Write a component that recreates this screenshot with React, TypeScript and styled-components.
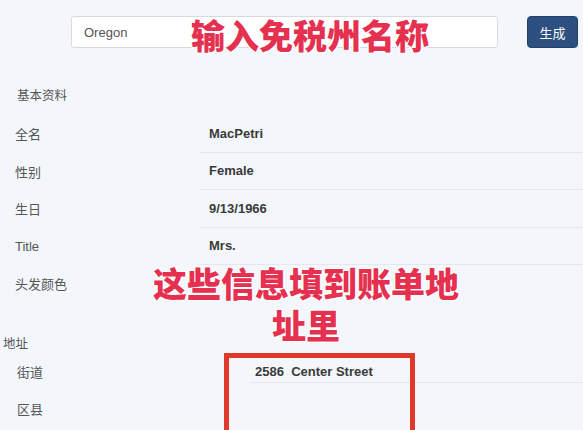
import styled, { createGlobalStyle } from "styled-components"

const GlobalStyle = createGlobalStyle`
    body {
        margin: 0;
        background-color: #f3f7fb;
        font-family: "Liberation Sans", "Noto Sans CJK SC", sans-serif;
    }
`

const Page = styled.div`
    position: relative;
    width: 583px;
    height: 430px;
    overflow: hidden;
    background-color: #f3f7fb;
`

const TopBar = styled.div`
    display: flex;
    align-items: center;
    gap: 29px;
    padding: 16px 5px 0 71px;
`

const SearchInput = styled.input`
    width: 427px;
    height: 32px;
    box-sizing: border-box;
    border: 1px solid #d6d9dd;
    border-radius: 3px;
    background-color: #ffffff;
    padding: 0 12px;
    font-family: "Liberation Sans", sans-serif;
    font-size: 13px;
    color: #555555;
    outline: none;
`

const GenerateButton = styled.button`
    width: 51px;
    height: 32px;
    background-color: #2d5081;
    border: 1px solid #22426c;
    border-radius: 4px;
    color: #ffffff;
    font-family: "Noto Sans CJK SC", sans-serif;
    font-size: 13px;
    padding: 0;
    cursor: pointer;
`

const SectionTitle = styled.div<{ $top: number; $left: number }>`
    margin: ${p => p.$top}px 0 0 ${p => p.$left}px;
    line-height: 20px;
    font-family: "Noto Sans CJK SC", sans-serif;
    font-size: 12.5px;
    color: #555555;
`

const InfoList = styled.div`
    margin-top: 10px;
`

const InfoRow = styled.div`
    display: grid;
    grid-template-columns: 185px 1fr;
    height: 37.5px;
    padding-left: 15px;

    &:last-child > div:last-child {
        border-bottom: none;
    }
`

const Label = styled.div`
    align-self: center;
    font-family: "Liberation Sans", "Noto Sans CJK SC", sans-serif;
    font-size: 13px;
    color: #555555;
`

const Value = styled.div`
    display: flex;
    align-items: center;
    padding-left: 9px;
    border-bottom: 1px solid #e3e8ee;
    font-weight: bold;
    font-size: 13px;
    color: #3a3a3a;
`

const AddressRow = styled.div`
    display: grid;
    grid-template-columns: 233px 1fr;
    height: 37px;
    padding-left: 17px;
`

const AddressValue = styled.div`
    align-self: start;
    margin-top: 9px;
    height: 20px;
    line-height: 20px;
    padding-left: 5px;
    border-bottom: 1px solid #e3e8ee;
    white-space: pre;
    font-weight: bold;
    font-size: 13px;
    color: #3a3a3a;
`

const Annotation = styled.div<{ $top: number; $left: number; $width: number }>`
    position: absolute;
    top: ${p => p.$top}px;
    left: ${p => p.$left}px;
    width: ${p => p.$width}px;
    text-align: center;
    font-family: "Noto Sans CJK SC", sans-serif;
    font-weight: 900;
    font-size: 34px;
    line-height: 42px;
    letter-spacing: 0;
    color: #e5304f;
    text-shadow:
        0 0 2px #ffffff,
        1px 1px 0 #ffffff,
        -1px -1px 0 #ffffff,
        1px -1px 0 #ffffff,
        -1px 1px 0 #ffffff;
    pointer-events: none;
`

const Highlight = styled.div`
    position: absolute;
    left: 224px;
    top: 353px;
    width: 181px;
    height: 100px;
    border: 5px solid #e0382a;
    pointer-events: none;
`

const basicInfo = [
    { label: "全名", value: "MacPetri" },
    { label: "性别", value: "Female" },
    { label: "生日", value: "9/13/1966" },
    { label: "Title", value: "Mrs." },
    { label: "头发颜色", value: "" },
]

const address = [
    { label: "街道", value: "2586  Center Street" },
    { label: "区县", value: "" },
]

export default function App() {
    return (
        <>
            <GlobalStyle />
            <Page>
                {/* 搜索栏 */}
                <TopBar>
                    <SearchInput defaultValue="Oregon" />
                    <GenerateButton>生成</GenerateButton>
                </TopBar>

                {/* 基本资料 */}
                <SectionTitle $top={37} $left={17}>基本资料</SectionTitle>
                <InfoList>
                    {basicInfo.map(item => (
                        <InfoRow key={item.label}>
                            <Label>{item.label}</Label>
                            <Value>{item.value}</Value>
                        </InfoRow>
                    ))}
                </InfoList>

                {/* 地址 */}
                <SectionTitle $top={30} $left={3}>地址</SectionTitle>
                {address.map(item => (
                    <AddressRow key={item.label}>
                        <Label>{item.label}</Label>
                        {item.value ? <AddressValue>{item.value}</AddressValue> : <div />}
                    </AddressRow>
                ))}

                {/* 标注 */}
                <Annotation $top={14} $left={176} $width={268}>输入免税州名称</Annotation>
                <Annotation $top={262} $left={141} $width={330}>
                    这些信息填到账单地<br />址里
                </Annotation>
                <Highlight />
            </Page>
        </>
    )
}
